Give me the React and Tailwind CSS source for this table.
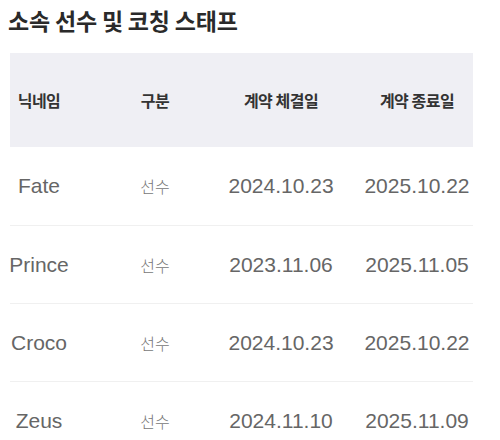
import React from "react";

const rows = [
  ["Fate", "선수", "2024.10.23", "2025.10.22"],
  ["Prince", "선수", "2023.11.06", "2025.11.05"],
  ["Croco", "선수", "2024.10.23", "2025.10.22"],
  ["Zeus", "선수", "2024.11.10", "2025.11.09"],
];

const grid = "grid grid-cols-[58px_174px_78px_153px]";
const latin = { fontFamily: '"Liberation Sans", Arial, sans-serif' };

function Cell({ children, className = "" }) {
  return (
    <div className={`flex items-center justify-center whitespace-nowrap ${className}`}>
      {children}
    </div>
  );
}

export default function App() {
  return (
    <div className="w-[500px] h-[440px] overflow-hidden bg-white" style={{ fontFamily: '"Noto Sans CJK KR", "Noto Sans", sans-serif' }}>
      <div className="pl-[8px] pt-[4px] h-[53px]">
        <h1 className="text-[23px] font-bold leading-[32px] text-[#2a2a2a] tracking-[-0.2px]">소속 선수 및 코칭 스태프</h1>
      </div>
      <div className="ml-[10px] w-[463px]">
        <div className={`${grid} h-[94px] bg-[#efeff4] text-[16px] font-bold text-[#333] tracking-[-0.5px]`}>
          <Cell>닉네임</Cell>
          <Cell>구분</Cell>
          <Cell>계약 체결일</Cell>
          <Cell className="pl-[41px]">계약 종료일</Cell>
        </div>
        {rows.map((r, i) => (
          <div key={i} className={`${grid} h-[78px] ${i > 0 ? "border-t border-[#f0f0f0]" : ""} text-[#666]`}>
            <Cell className="text-[21px]">
              <span style={latin}>{r[0]}</span>
            </Cell>
            <Cell className="text-[16px] font-light text-[#777]">{r[1]}</Cell>
            <Cell className="text-[21px]">
              <span style={latin}>{r[2]}</span>
            </Cell>
            <Cell className="text-[21px] pl-[41px]">
              <span style={latin}>{r[3]}</span>
            </Cell>
          </div>
        ))}
      </div>
    </div>
  );
}
